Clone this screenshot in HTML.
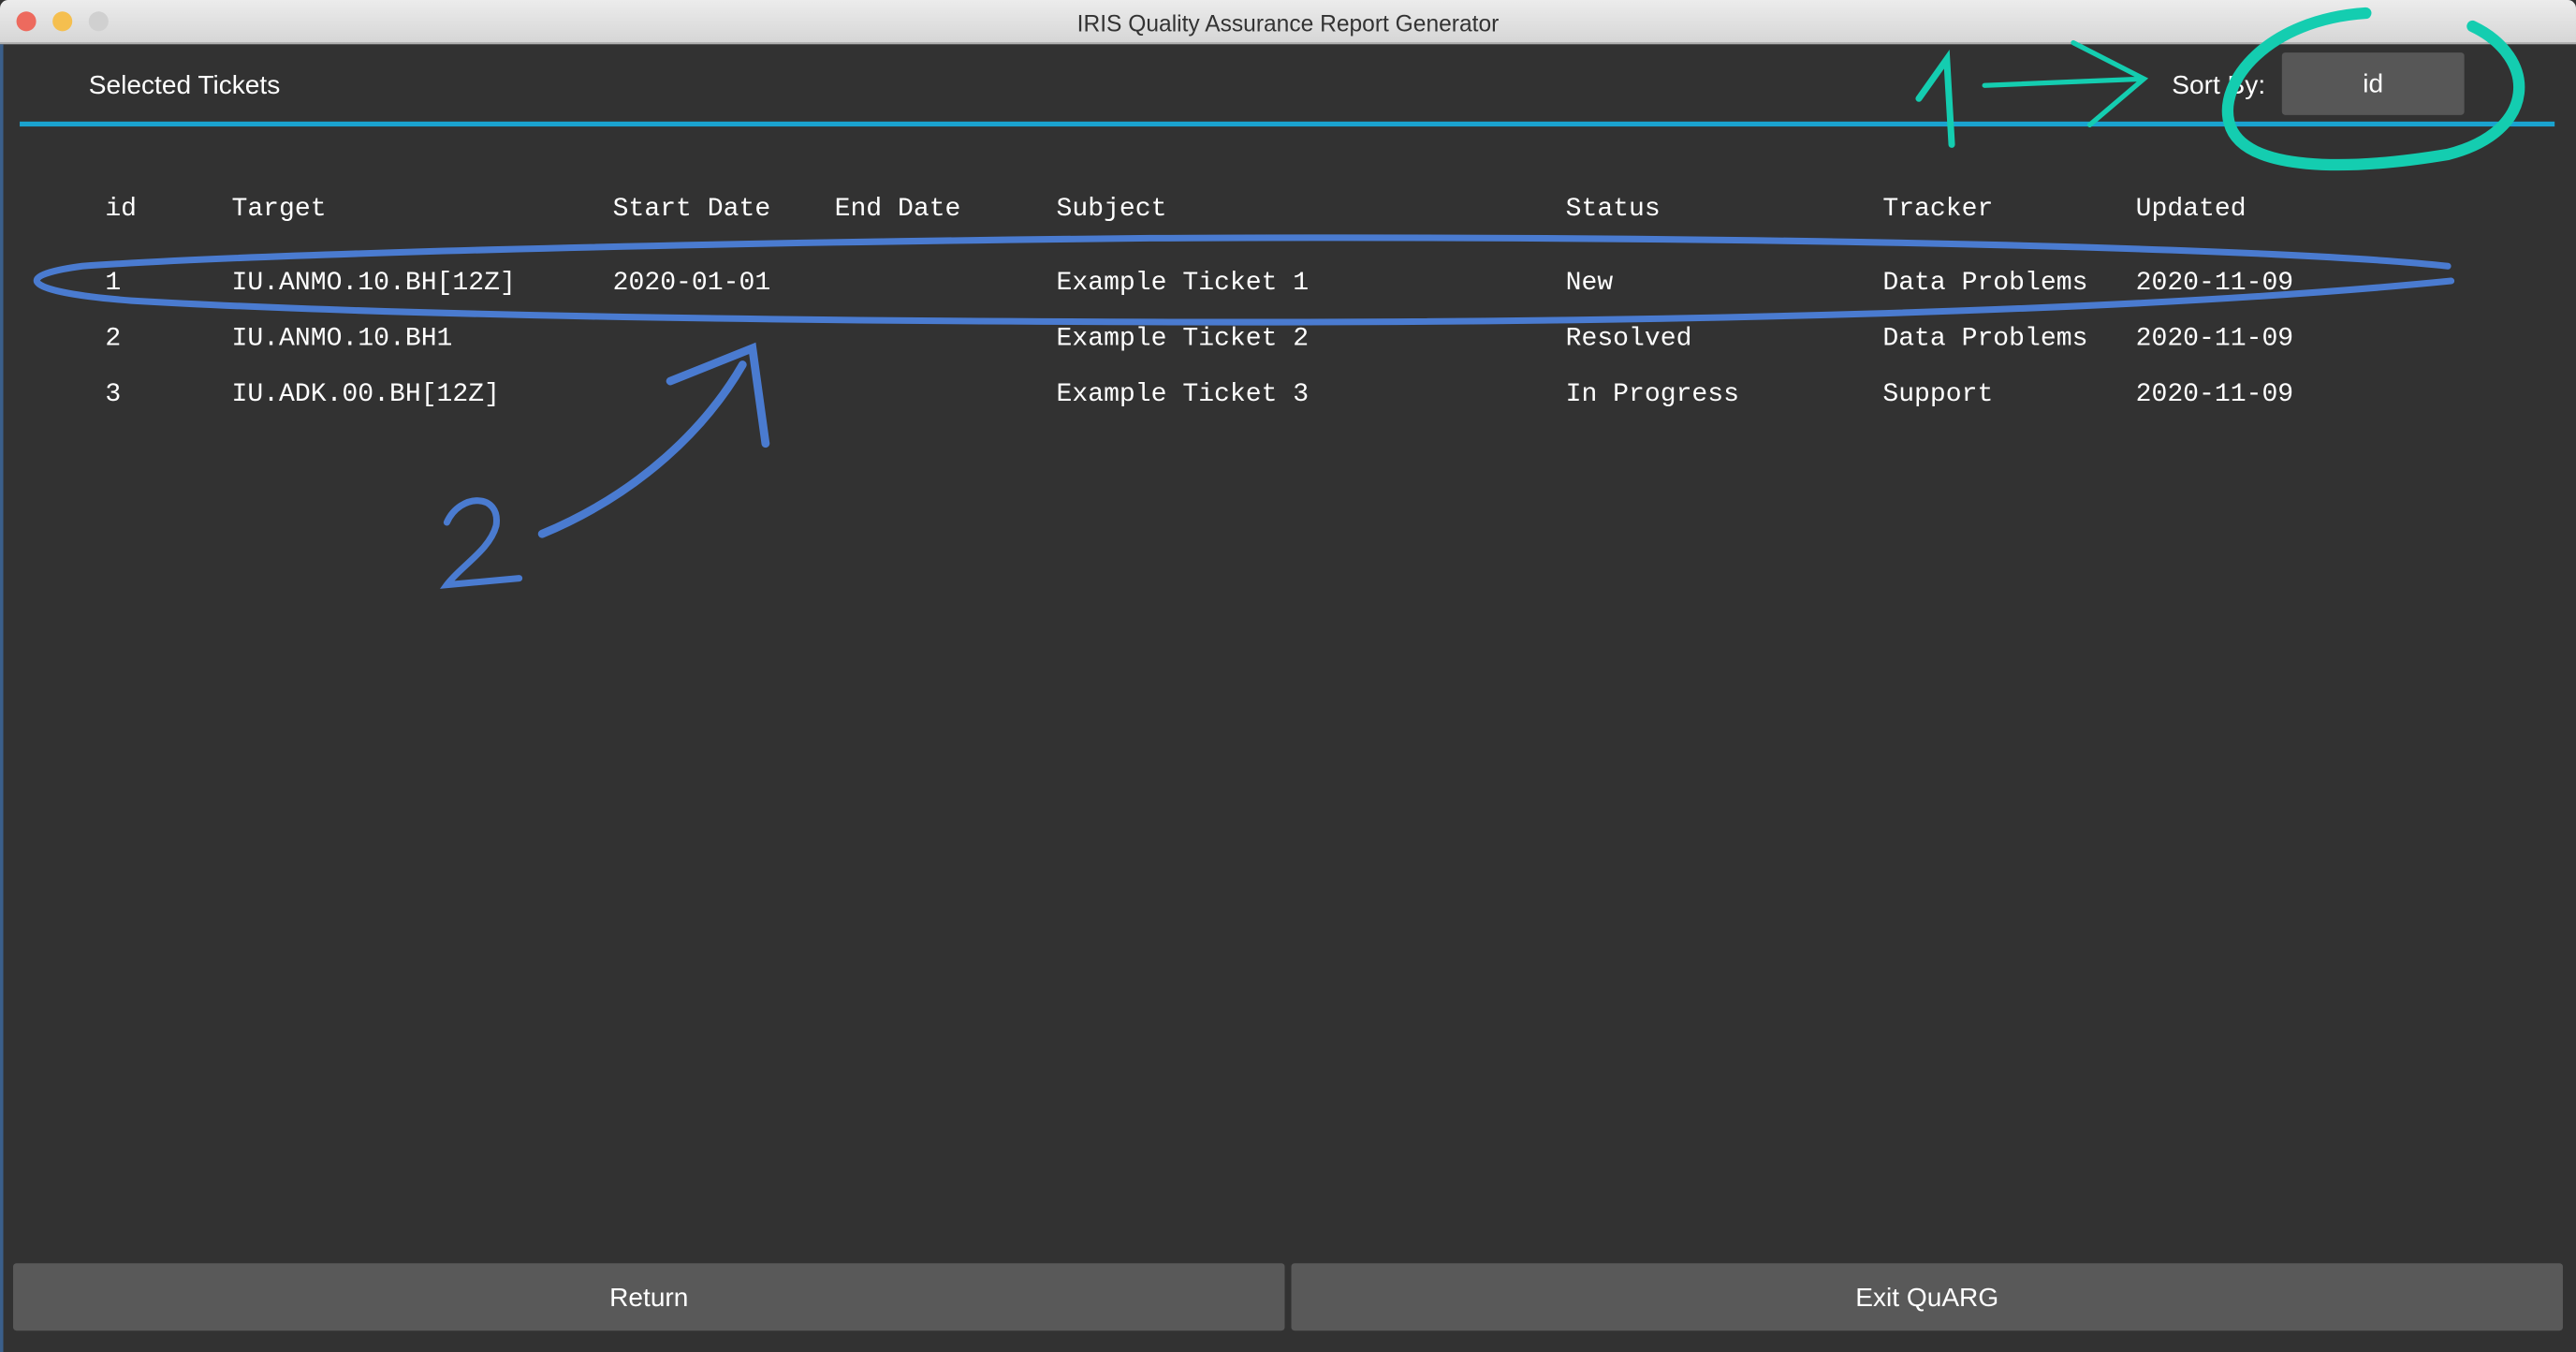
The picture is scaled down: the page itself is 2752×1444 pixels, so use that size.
<!DOCTYPE html>
<html><head><meta charset="utf-8"><style>
html,body{margin:0;padding:0;background:#323232;overflow:hidden;width:2752px;height:1444px}
#w{position:absolute;left:0;top:0;width:1568px;height:823px;transform:scale(1.75510,1.75456);transform-origin:0 0;background:#323232;font-family:"Liberation Sans",sans-serif;color:#fff}
.tb{position:absolute;left:0;top:0;width:1568px;height:26px;background:linear-gradient(#ececec,#d6d6d6);border-bottom:1px solid #b0b0b0;border-radius:5px 5px 0 0}
.tb .t{position:absolute;left:0;right:0;top:6px;text-align:center;font-size:14px;color:#333}
.dot{position:absolute;top:7px;width:12px;height:12px;border-radius:50%}
.m{position:absolute;font-family:"Liberation Mono",monospace;font-size:16px;white-space:pre}
.btn{position:absolute;top:769px;height:41px;background:#595959;border-radius:2px;text-align:center;line-height:43px;font-size:16px}
</style></head><body><div id="w">
<div class="tb"><div class="dot" style="left:10px;background:#ed6a5e"></div><div class="dot" style="left:32px;background:#f5bf4f"></div><div class="dot" style="left:54px;background:#d0d0d0"></div><div class="t">IRIS Quality Assurance Report Generator</div></div>
<div style="position:absolute;left:0;top:27px;width:2px;height:796px;background:#3b5f8a"></div>
<div style="position:absolute;left:54px;top:44px;font-size:16px">Selected Tickets</div>
<div style="position:absolute;left:1322px;top:44px;font-size:16px">Sort By:</div>
<div style="position:absolute;left:1389px;top:32px;width:111px;height:38px;background:#575757;border-radius:2px;text-align:center;line-height:40px;font-size:16px">id</div>
<div style="position:absolute;left:12px;top:74px;width:1543px;height:3px;background:#1aa3cf"></div>
<div class="m" style="left:64px;top:118px">id</div><div class="m" style="left:141px;top:118px">Target</div><div class="m" style="left:373px;top:118px">Start Date</div><div class="m" style="left:508px;top:118px">End Date</div><div class="m" style="left:643px;top:118px">Subject</div><div class="m" style="left:953px;top:118px">Status</div><div class="m" style="left:1146px;top:118px">Tracker</div><div class="m" style="left:1300px;top:118px">Updated</div>
<div class="m" style="left:64px;top:163px">1</div><div class="m" style="left:141px;top:163px">IU.ANMO.10.BH[12Z]</div><div class="m" style="left:373px;top:163px">2020-01-01</div><div class="m" style="left:643px;top:163px">Example Ticket 1</div><div class="m" style="left:953px;top:163px">New</div><div class="m" style="left:1146px;top:163px">Data Problems</div><div class="m" style="left:1300px;top:163px">2020-11-09</div>
<div class="m" style="left:64px;top:197px">2</div><div class="m" style="left:141px;top:197px">IU.ANMO.10.BH1</div><div class="m" style="left:643px;top:197px">Example Ticket 2</div><div class="m" style="left:953px;top:197px">Resolved</div><div class="m" style="left:1146px;top:197px">Data Problems</div><div class="m" style="left:1300px;top:197px">2020-11-09</div>
<div class="m" style="left:64px;top:231px">3</div><div class="m" style="left:141px;top:231px">IU.ADK.00.BH[12Z]</div><div class="m" style="left:643px;top:231px">Example Ticket 3</div><div class="m" style="left:953px;top:231px">In Progress</div><div class="m" style="left:1146px;top:231px">Support</div><div class="m" style="left:1300px;top:231px">2020-11-09</div>
<div class="btn" style="left:8px;width:774px">Return</div>
<div class="btn" style="left:786px;width:774px">Exit QuARG</div>
<svg style="position:absolute;left:0;top:0" width="1568" height="823" fill="none" stroke-linecap="round">
<path d="M1490 162 C1400 152 1100 143 700 145 C400 148 150 155 50 162 C5 168 15 178 80 183 C200 190 400 195 700 196 C1000 197 1300 190 1492 171" stroke="#4a7bd0" stroke-width="4"/>
<path d="M1440 8 C1380 12 1350 50 1357 75 C1365 105 1430 104 1490 94 C1545 80 1545 35 1505 16" stroke="#14cdb0" stroke-width="7"/>
<path d="M1168 60 L1185 36 L1188 88" stroke="#14cdb0" stroke-width="4"/>
<path d="M1208 52 L1305 48 M1262 26 L1305 48 L1272 76" stroke="#14cdb0" stroke-width="3"/>
<path d="M330 325 C390 300 430 260 452 222 M408 232 L458 212 L466 270" stroke="#4a7bd0" stroke-width="5"/>
<path d="M272 318 C280 300 305 300 302 320 C298 335 280 345 272 356 L316 352" stroke="#4a7bd0" stroke-width="4"/>
</svg>
</div></body></html>
